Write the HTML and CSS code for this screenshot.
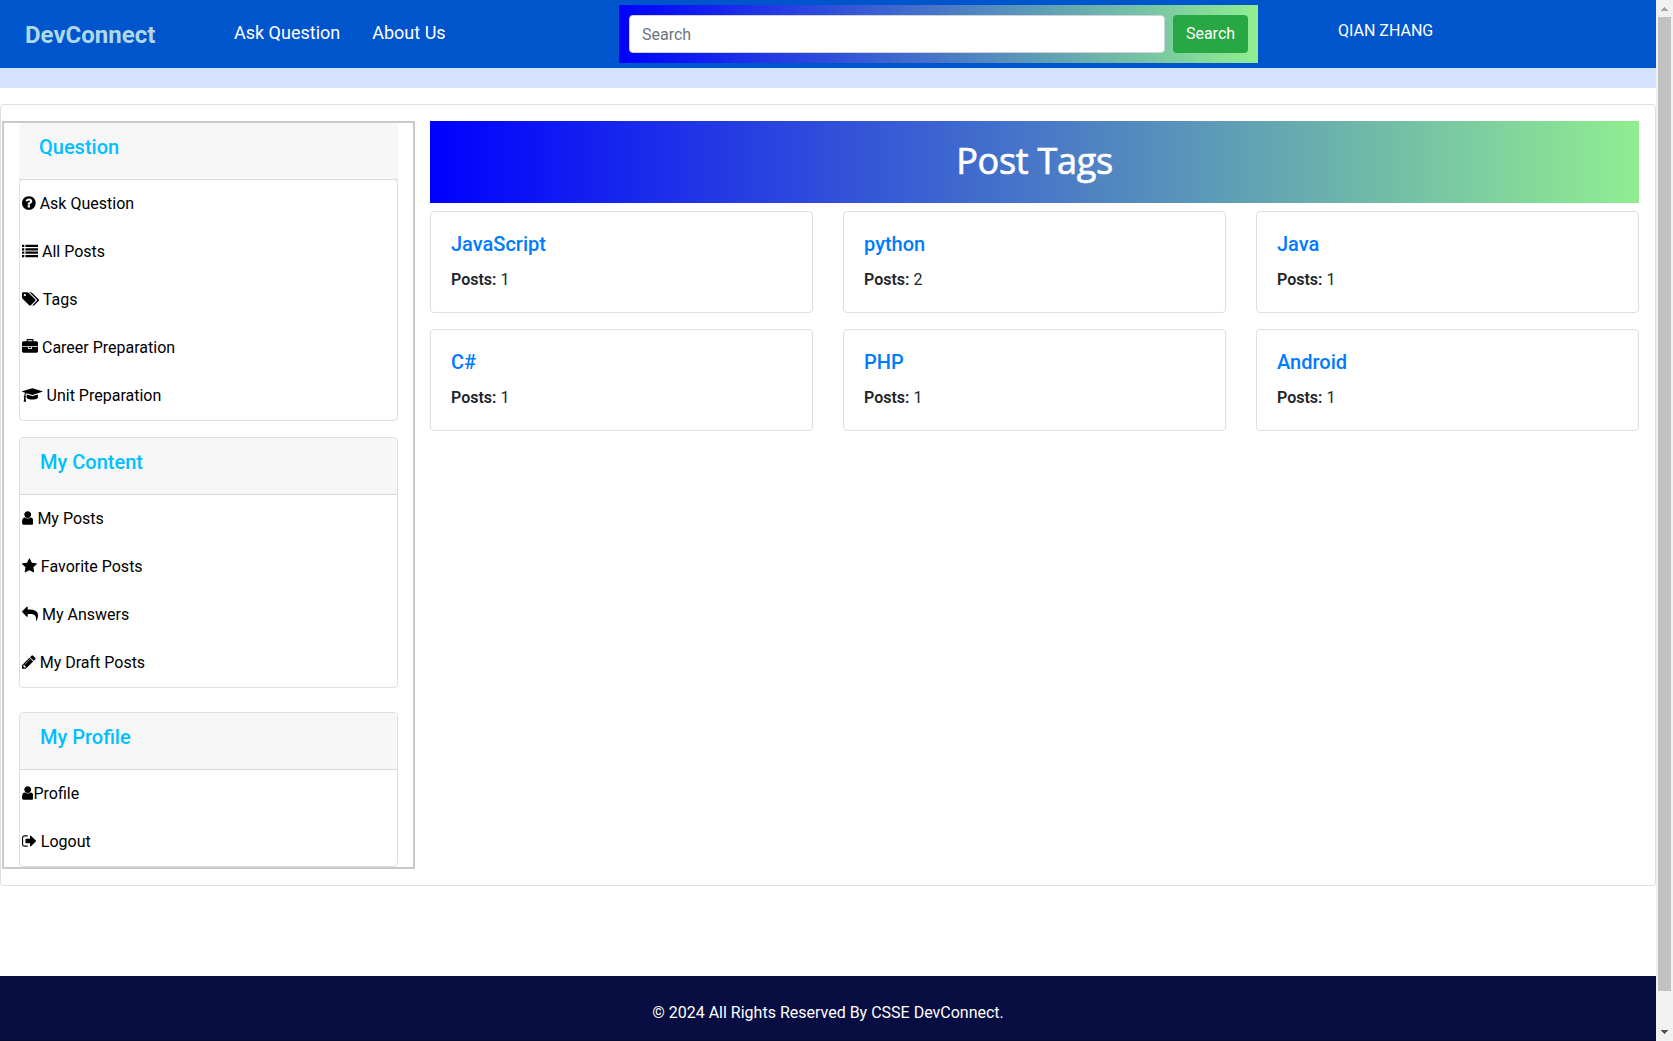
FILE: index.html
```html
<!DOCTYPE html>
<html lang="en">
<head>
<meta charset="utf-8">
<title>DevConnect - Post Tags</title>
<link rel="stylesheet" href="styles.css">
</head>
<body>
<div class="page">
  <nav class="navbar">
    <a class="brand">DevConnect</a>
    <a class="nav-link">Ask Question</a>
    <a class="nav-link">About Us</a>
    <form class="search">
      <input class="search-input" type="text" placeholder="Search">
      <button class="search-btn" type="button">Search</button>
    </form>
    <span class="user">QIAN ZHANG</span>
  </nav>
  <div class="band"></div>

  <div class="shell">
    <aside class="sidebar">
      <h5 class="group-title group-title-first">Question</h5>
      <div class="group group-first">
        <a class="item"><svg class="icon" width="13.71" height="16" viewBox="128 0 1536 1792"><path d="M1024 1376v-192q0-14-9-23t-23-9h-192q-14 0-23 9t-9 23v192q0 14 9 23t23 9h192q14 0 23-9t9-23zm256-672q0-88-55.5-163t-138.5-116-170-41q-243 0-371 213-15 24 8 42l132 100q7 6 19 6 16 0 25-12 53-68 86-92 34-24 86-24 48 0 85.5 26t37.5 59q0 38-20 61t-68 45q-63 28-115.5 86.5t-52.5 125.5v36q0 14 9 23t23 9h192q14 0 23-9t9-23q0-19 21.5-49.5t54.5-49.5q32-18 49-28.5t46-35 44.5-48 28-60.5 12.5-81zm384 192q0 209-103 385.5t-279.5 279.5-385.5 103-385.5-103-279.5-279.5-103-385.5 103-385.5 279.5-279.5 385.5-103 385.5 103 279.5 279.5 103 385.5z"/></svg> Ask Question</a>
        <a class="item"><svg class="icon" width="16" height="16" viewBox="0 0 1792 1792"><path d="M0 256h256v256H0zM384 256h1408v256H384zM0 640h256v256H0zM384 640h1408v256H384zM0 1024h256v256H0zM384 1024h1408v256H384zM0 1408h256v256H0zM384 1408h1408v256H384z" transform="translate(0 -64)"/></svg> All Posts</a>
        <a class="item"><svg class="icon" width="17.14" height="16" viewBox="0 0 1920 1792"><path d="M448 448q0-53-37.5-90.5t-90.5-37.5-90.5 37.5-37.5 90.5 37.5 90.5 90.5 37.5 90.5-37.5 37.5-90.5zm1067 576q0 53-37 90l-491 492q-39 37-91 37-53 0-90-37l-715-716q-38-37-64.5-101t-26.5-117v-416q0-52 38-90t90-38h416q53 0 117 26.5t102 64.5l715 714q37 39 37 91zm384 0q0 53-37 90l-491 492q-39 37-91 37-36 0-59-14t-53-45l470-470q37-37 37-90 0-52-37-91l-715-714q-38-38-102-64.5t-117-26.5h224q53 0 117 26.5t102 64.5l715 714q37 39 37 91z"/></svg> Tags</a>
        <a class="item"><svg class="icon" width="16" height="16" viewBox="0 0 1792 1792"><path d="M640 256h512v-128h-512v128zm1152 640v480q0 66-47 113t-113 47h-1472q-66 0-113-47t-47-113v-480h672v160q0 26 19 45t45 19h320q26 0 45-19t19-45v-160h672zm-768 0v128h-256v-128h256zm768-480v384h-1792v-384q0-66 47-113t113-47h352v-160q0-40 28-68t68-28h576q40 0 68 28t28 68v160h352q66 0 113 47t47 113z"/></svg> Career Preparation</a>
        <a class="item"><svg class="icon" width="20.57" height="16" viewBox="0 0 2304 1792"><path d="M1774 836l18 316q4 69-82 128t-235 93.5-323 34.5-323-34.5-235-93.5-82-128l18-316 574 181q22 7 48 7t48-7zm530-324q0 23-22 31l-1120 352q-4 1-10 1t-10-1l-652-206q-43 34-71 111.5t-34 178.5q63 36 63 109 0 69-58 107l58 433q2 14-8 25-9 11-24 11h-192q-15 0-24-11-10-11-8-25l58-433q-58-38-58-107 0-73 65-111 11-207 98-330l-333-104q-22-8-22-31t22-31l1120-352q4-1 10-1t10 1l1120 352q22 8 22 31z"/></svg> Unit Preparation</a>
      </div>

      <div class="group group-content">
        <h5 class="group-title">My Content</h5>
        <a class="item"><svg class="icon" width="11.43" height="16" viewBox="256 0 1280 1792"><path d="M1536 1399q0 109-62.5 187t-150.5 78h-854q-88 0-150.5-78t-62.5-187q0-85 8.5-160.5t31.5-152 58.5-131 94-89 134.5-34.5q131 128 313 128t313-128q76 0 134.5 34.5t94 89 58.5 131 31.5 152 8.5 160.5zm-256-887q0 159-112.5 271.5t-271.5 112.5-271.5-112.5-112.5-271.5 112.5-271.5 271.5-112.5 271.5 112.5 112.5 271.5z"/></svg> My Posts</a>
        <a class="item"><svg class="icon" width="14.86" height="16" viewBox="64 0 1664 1792"><path d="M1728 647q0 22-26 48l-363 354 86 500q1 7 1 20 0 21-10.5 35.5t-30.5 14.5q-19 0-40-12l-449-236-449 236q-22 12-40 12-21 0-31.5-14.5t-10.5-35.5q0-6 2-20l86-500-364-354q-25-27-25-48 0-37 56-46l502-73 225-455q19-41 49-41t49 41l225 455 502 73q56 9 56 46z"/></svg> Favorite Posts</a>
        <a class="item"><svg class="icon" width="16" height="16" viewBox="0 0 1792 1792"><path d="M1792 1120q0 166-127 451-3 7-10.5 24t-13.5 30-13 22q-12 17-28 17-15 0-23.5-10t-8.5-25q0-9 2.5-26.5t2.5-23.5q5-68 5-123 0-101-17.5-181t-48.5-138.5-80-101-105.5-69.5-133-42.5-154-21.5-175.5-6h-224v256q0 26-19 45t-45 19-45-19l-512-512q-19-19-19-45t19-45l512-512q19-19 45-19t45 19 19 45v256h224q713 0 875 403 53 134 53 333z"/></svg> My Answers</a>
        <a class="item"><svg class="icon" width="13.71" height="16" viewBox="128 0 1536 1792"><path d="M491 1536l91-91-235-235-91 91v107h128v128h107zm523-928q0-22-22-22-10 0-17 7l-542 542q-7 7-7 17 0 22 22 22 10 0 17-7l542-542q7-7 7-17zm-54-192l416 416-832 832h-416v-416zm683 96q0 53-37 90l-166 166-416-416 166-165q36-38 90-38 53 0 91 38l235 234q37 39 37 91z"/></svg> My Draft Posts</a>
      </div>

      <div class="group group-profile">
        <h5 class="group-title">My Profile</h5>
        <a class="item"><svg class="icon" width="11.43" height="16" viewBox="256 0 1280 1792"><path d="M1536 1399q0 109-62.5 187t-150.5 78h-854q-88 0-150.5-78t-62.5-187q0-85 8.5-160.5t31.5-152 58.5-131 94-89 134.5-34.5q131 128 313 128t313-128q76 0 134.5 34.5t94 89 58.5 131 31.5 152 8.5 160.5zm-256-887q0 159-112.5 271.5t-271.5 112.5-271.5-112.5-112.5-271.5 112.5-271.5 271.5-112.5 271.5 112.5 112.5 271.5z"/></svg>Profile</a>
        <a class="item"><svg class="icon" width="14.86" height="16" viewBox="64 0 1664 1792"><path d="M704 1440q0 4 1 20t.5 26.5-3 23.5-10 19.5-20.5 6.5h-320q-119 0-203.5-84.5t-84.5-203.5v-704q0-119 84.5-203.5t203.5-84.5h320q13 0 22.5 9.5t9.5 22.5q0 4 1 20t.5 26.5-3 23.5-10 19.5-20.5 6.5h-320q-66 0-113 47t-47 113v704q0 66 47 113t113 47h312l11.5 1 11.5 3 8 5.5 7 9 2 13.5zm928-544q0 26-19 45l-544 544q-19 19-45 19t-45-19-19-45v-288h-448q-26 0-45-19t-19-45v-384q0-26 19-45t45-19h448v-288q0-26 19-45t45-19 45 19l544 544q19 19 19 45z"/></svg> Logout</a>
      </div>
    </aside>

    <main class="main">
      <h1 class="title">Post Tags</h1>
      <div class="tags">
        <div class="tag"><h5 class="tag-name">JavaScript</h5><p class="count"><b>Posts:</b> 1</p></div>
        <div class="tag"><h5 class="tag-name">python</h5><p class="count"><b>Posts:</b> 2</p></div>
        <div class="tag"><h5 class="tag-name">Java</h5><p class="count"><b>Posts:</b> 1</p></div>
        <div class="tag"><h5 class="tag-name">C#</h5><p class="count"><b>Posts:</b> 1</p></div>
        <div class="tag"><h5 class="tag-name">PHP</h5><p class="count"><b>Posts:</b> 1</p></div>
        <div class="tag"><h5 class="tag-name">Android</h5><p class="count"><b>Posts:</b> 1</p></div>
      </div>
    </main>
  </div>

  <footer class="footer">© 2024 All Rights Reserved By CSSE DevConnect.</footer>
</div>
<div class="scrollbar">
  <svg class="arrow" width="17" height="17" viewBox="0 0 17 17" shape-rendering="crispEdges"><path fill="#a3a3a3" d="M8 7h1v1h1v1h1v1h1v1H5v-1h1V9h1V8h1z"/></svg>
  <div class="thumb"></div>
  <svg class="arrow" width="17" height="17" viewBox="0 0 17 17" shape-rendering="crispEdges"><path fill="#505050" d="M5 6h7v1h-1v1h-1v1H9v1H8V9H7V8H6V7H5z"/></svg>
</div>
</body>
</html>
```
FILE: styles.css
```css
* { box-sizing: border-box; }

body {
  margin: 0;
  display: flex;
  height: 1041px;
  overflow: hidden;
  background: #fff;
  color: #212529;
  font: 400 16px/24px Roboto, sans-serif;
}

h1, h5, p { margin: 0; }

.page {
  width: 1656px;
  display: flex;
  flex-direction: column;
}

/* Top bar */
.navbar {
  height: 68px;
  flex: none;
  display: flex;
  align-items: flex-start;
  padding: 5px 0 0 25px;
  background: #0055cc;
  color: #fff;
}

.brand {
  width: 209px;
  padding-top: 12px;
  color: lightblue;
  font-size: 24px;
  font-weight: 700;
  line-height: 36px;
}

.nav-link {
  margin-right: 32px;
  padding-top: 14px;
  font-size: 18px;
  line-height: 27px;
}

.search {
  display: flex;
  gap: 8px;
  width: 639px;
  height: 58px;
  margin-left: auto;
  padding: 10px;
  background: linear-gradient(to right, blue, lightgreen);
}

.search-input {
  flex: 1;
  min-width: 0;
  height: 38px;
  padding: 6px 12px;
  border: 1px solid #ced4da;
  border-radius: 4px;
  font: 400 16px/24px Roboto, sans-serif;
}

.search-input::placeholder { color: #6c757d; }

.search-btn {
  width: 75px;
  height: 38px;
  padding: 0;
  border: 0;
  border-radius: 4px;
  background: #28a745;
  color: #fff;
  font: 400 16px/24px Roboto, sans-serif;
}

.user {
  width: 318px;
  margin-left: 80px;
  padding-top: 14px;
}

.band {
  height: 20px;
  flex: none;
  background: #d2e2ff;
}

/* Content */
.shell {
  display: flex;
  align-items: flex-start;
  gap: 15px;
  height: 782px;
  flex: none;
  margin-top: 16px;
  padding: 16px 16px 16px 1px;
  border: 1px solid #dfdfdf;
  border-radius: 4px;
}

.sidebar {
  width: 413px;
  height: 748px;
  padding: 0 15px;
  border: 2px solid #c9c9c9;
}

.group {
  border: 1px solid #dfdfdf;
  border-radius: 4px;
}

.group-first { margin-top: -1px; }
.group-content { margin-top: 16px; }
.group-profile { margin-top: 24px; }

.group-title {
  height: 57px;
  padding: 12px 20px;
  border-bottom: 1px solid #d8d8d8;
  border-radius: 3px 3px 0 0;
  background: #f7f7f7;
  color: deepskyblue;
  font-size: 20px;
  font-weight: 500;
  line-height: 24px;
}

.group-title-first { border-radius: 3px 3px 0 0; }

.item {
  display: block;
  height: 48px;
  padding: 12px 2px;
  color: #000;
}

.icon {
  fill: currentColor;
  vertical-align: -2.29px;
}

.main { flex: 1; }

.title {
  height: 82px;
  padding-top: 18px;
  background: linear-gradient(to right, blue, lightgreen);
  color: #fff;
  font: 400 36px/43px "Open Sans", sans-serif;
  letter-spacing: -0.3px;
  -webkit-text-stroke: 0.7px #fff;
  text-align: center;
}

.tags {
  display: grid;
  grid-template-columns: repeat(3, 1fr);
  gap: 16px 30px;
  margin-top: 8px;
}

.tag {
  height: 102px;
  padding: 20px;
  border: 1px solid #dfdfdf;
  border-radius: 4px;
}

.tag-name {
  margin-bottom: 12px;
  color: #007bff;
  font-size: 20px;
  font-weight: 500;
  line-height: 24px;
}

.count b { font-weight: 600; }

.footer {
  height: 65px;
  margin-top: auto;
  padding-top: 25px;
  border-bottom: 1px solid #050a33;
  background: #080d42;
  color: #fff;
  text-align: center;
}

/* Page scrollbar */
.scrollbar {
  display: flex;
  flex-direction: column;
  width: 17px;
  background: #f1f1f1;
}

.thumb {
  height: 974px;
  margin: 0 2px 33px;
  background: #c1c1c1;
}

.arrow { display: block; flex: none; }
```
